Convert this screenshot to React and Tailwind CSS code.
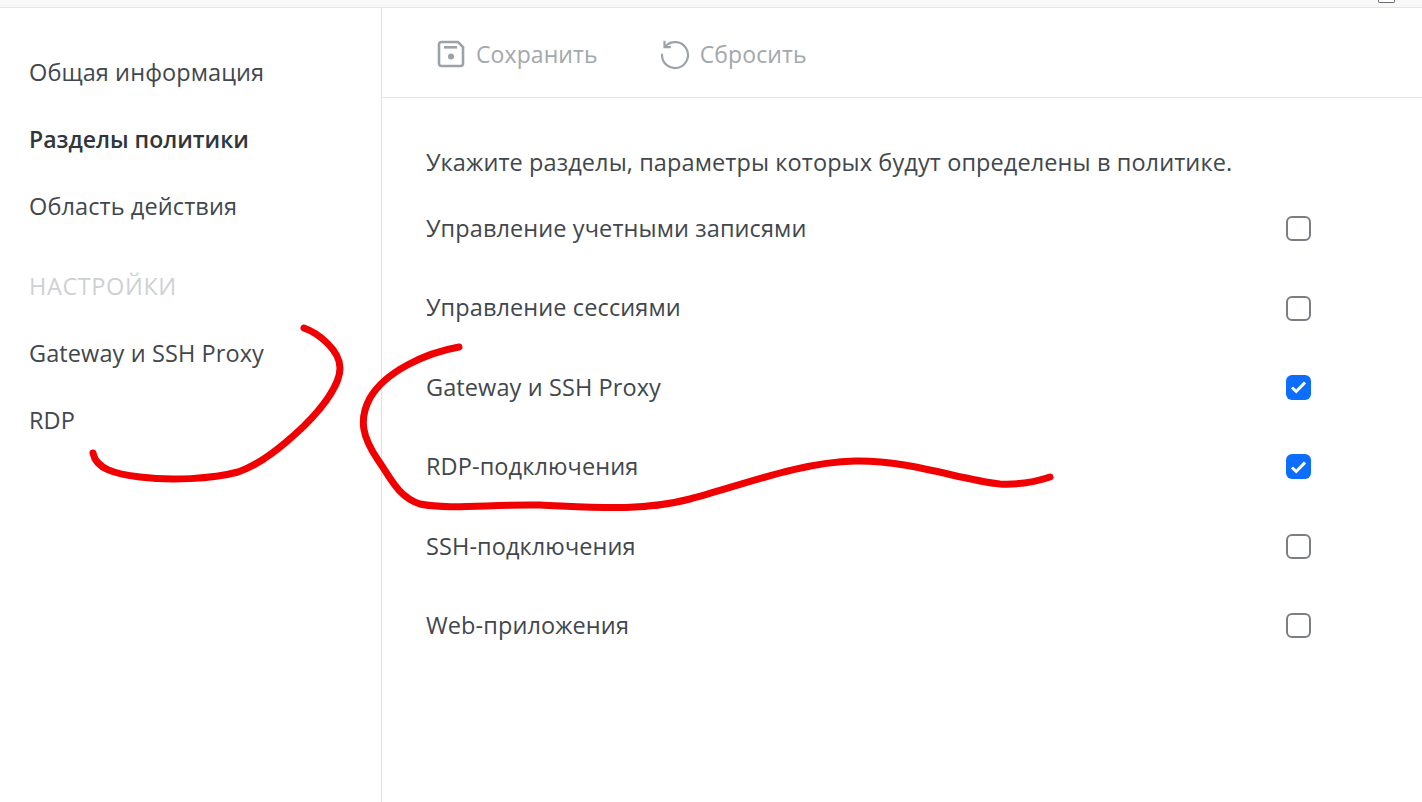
import React from 'react';

const font = 'font-["Open_Sans","Noto_Sans",sans-serif]';

const sections = [
  { label: 'Управление учетными записями', checked: false },
  { label: 'Управление сессиями', checked: false },
  { label: 'Gateway и SSH Proxy', checked: true },
  { label: 'RDP-подключения', checked: true },
  { label: 'SSH-подключения', checked: false },
  { label: 'Web-приложения', checked: false },
];

const SaveIcon = () => (
  <svg width="30" height="30" viewBox="0 0 30 30" fill="none" className="shrink-0">
    <path d="M3 5.5A2.5 2.5 0 0 1 5.5 3H22l5 5v16.5a2.5 2.5 0 0 1-2.5 2.5h-19A2.5 2.5 0 0 1 3 24.5z" stroke="#9ca3a8" strokeWidth="2.6" />
    <rect x="8" y="7" width="13" height="2.6" fill="#9ca3a8" />
    <circle cx="15" cy="17.5" r="3" fill="#9ca3a8" />
  </svg>
);

const ResetIcon = () => (
  <svg width="32" height="32" viewBox="0 0 32 32" fill="none" className="shrink-0">
    <path d="M6.5 8.2A13 13 0 1 1 3 16.5" stroke="#9ca3a8" strokeWidth="2.2" strokeLinecap="round" />
    <path d="M5.5 2.8v6.4h6.4" stroke="#9ca3a8" strokeWidth="2.2" />
  </svg>
);

const Checkbox = ({ checked }) =>
  checked ? (
    <span className="flex h-[25px] w-[25px] items-center justify-center rounded-[6px] bg-[#0d6efd]">
      <svg width="17" height="14" viewBox="0 0 17 14" fill="none">
        <path d="M2 7.5l4.2 4L15 2.5" stroke="white" strokeWidth="3" />
      </svg>
    </span>
  ) : (
    <span className="block h-[25px] w-[25px] rounded-[6px] border-2 border-[#7b7f83] bg-white" />
  );

const SideItem = ({ children, bold }) => (
  <div className={`flex h-[67px] items-center whitespace-nowrap pl-[29px] ${bold ? 'text-[23px] font-semibold tracking-normal text-[#30363c]' : 'text-[#41474d]'}`}>
    {children}
  </div>
);

export default function App() {
  return (
    <div className={`relative h-[802px] w-[1422px] overflow-hidden bg-white text-[23.5px] tracking-[0.1px] ${font}`}>
      {/* полоса сверху */}
      <div className="relative h-[8px] border-b border-[#e3e6e8] bg-[#f8f8f8]">
        <div className="absolute left-[1378px] top-0 h-[3px] w-[17px] rounded-b-[2px] border-x border-b border-[#6b6f73] bg-white" />
      </div>

      <div className="flex h-[794px]">
        <aside className="w-[382px] shrink-0 border-r border-[#dfe2e5] pt-[31px]">
          <SideItem>Общая информация</SideItem>
          <SideItem bold>Разделы политики</SideItem>
          <SideItem>Область действия</SideItem>
          <div className="flex h-[80px] items-center pl-[29px] pt-[13px] tracking-[0.6px] text-[#ced1d4]">НАСТРОЙКИ</div>
          <SideItem>Gateway и SSH Proxy</SideItem>
          <SideItem>RDP</SideItem>
        </aside>

        <main className="min-w-0 flex-1">
          <div className="flex h-[90px] items-center border-b border-[#e3e6e8] pl-[54px] pt-[2px] text-[23px] text-[#a3a8ac]">
            <button className="flex items-center gap-[10px]">
              <SaveIcon />
              <span className="pt-[2px]">Сохранить</span>
            </button>
            <button className="ml-[61px] flex items-center gap-[9px]">
              <ResetIcon />
              <span className="pt-[2px]">Сбросить</span>
            </button>
          </div>

          <div className="pl-[44px] pr-[111px] pt-[45px] text-[#41474d]">
            <p className="h-[38px] whitespace-nowrap leading-[38px]">
              Укажите разделы, параметры которых будут определены в политике.
            </p>
            <div className="mt-[8px]">
              {sections.map((s) => (
                <div key={s.label} className="flex h-[79.4px] items-center justify-between">
                  <span>{s.label}</span>
                  <Checkbox checked={s.checked} />
                </div>
              ))}
            </div>
          </div>
        </main>
      </div>

      {/* красные пометки поверх скриншота */}
      <svg className="pointer-events-none absolute left-0 top-0" width="1422" height="802" fill="none">
        <path
          d="M304 328C318 333 340 350 340 368C340 385 322 408 304 426C285 444 262 464 238 472C212 479 170 481 140 477C115 474 96 469 93 453"
          stroke="#f00000"
          strokeWidth="7"
          strokeLinecap="round"
        />
        <path
          d="M459 347C425 353 385 372 370 398C358 420 363 438 378 460C390 477 398 497 420 504C450 510 490 504 540 505C590 507 640 512 690 499C740 486 800 462 855 461C910 460 960 480 1000 484C1020 485 1035 482 1050 477"
          stroke="#f00000"
          strokeWidth="7"
          strokeLinecap="round"
        />
      </svg>
    </div>
  );
}
